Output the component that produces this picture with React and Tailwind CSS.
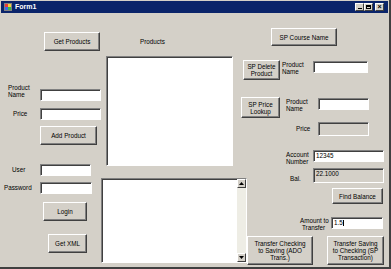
import React from "react";

const font = "font-['Liberation_Sans',Arial,sans-serif]";

// classic raised 3d button
const Btn = ({ className = "", children }) => (
  <div
    className={`flex items-center justify-center text-center leading-[7px] text-[6.3px] text-black bg-[#d4d0c8] border border-t-white border-l-white border-r-[#404040] border-b-[#404040] shadow-[inset_-1px_-1px_0_#808080] ${className}`}
  >
    <div>{children}</div>
  </div>
);

// sunken textbox
const Box = ({ className = "", grey, children }) => (
  <div
    className={`border border-t-[#808080] border-l-[#808080] border-r-white border-b-white shadow-[inset_1px_1px_0_#404040] pl-[2px] pt-[1px] text-[6.3px] leading-[8px] text-black ${grey ? "bg-[#d4d0c8]" : "bg-white"} ${className}`}
  >
    {children}
  </div>
);

const Label = ({ className = "", children }) => (
  <div className={`text-[6.3px] leading-[7px] text-black ${className}`}>{children}</div>
);

const TitleBar = () => (
  <div className="mx-[1px] mt-[1px] h-[12px] bg-[#0a246a] flex items-center pl-[3px] pr-[4px]">
    <svg width="8" height="8" viewBox="0 0 8 8">
      <rect x="0" y="0" width="8" height="8" fill="#808080" />
      <rect x="1" y="1" width="3" height="3" fill="#e83a3a" />
      <rect x="4" y="1" width="3" height="3" fill="#f2d23a" />
      <rect x="1" y="4" width="3" height="3" fill="#3a6ae8" />
      <rect x="4" y="4" width="3" height="3" fill="#3ab84a" />
    </svg>
    <span className="ml-[3px] text-white font-bold text-[7px] leading-[8px]">Form1</span>
    <div className="flex-1" />
    <div className="flex items-center">
      <div className="w-[9px] h-[8px] bg-[#d4d0c8] border border-t-white border-l-white border-r-[#404040] border-b-[#404040] flex items-end justify-center pb-[1px]">
        <div className="w-[4px] h-[1px] bg-black" />
      </div>
      <div className="w-[9px] h-[8px] bg-[#d4d0c8] border border-t-white border-l-white border-r-[#404040] border-b-[#404040] flex items-center justify-center">
        <div className="w-[5px] h-[4px] border border-black border-t-2" />
      </div>
      <div className="ml-[2px] w-[9px] h-[8px] bg-[#d4d0c8] border border-t-white border-l-white border-r-[#404040] border-b-[#404040] flex items-center justify-center text-[7px] leading-[6px] font-bold text-black">
        ×
      </div>
    </div>
  </div>
);

export default function App() {
  return (
    <div className={`${font} w-[391px] h-[269px] bg-[#d4d0c8] border-r-2 border-b-2 border-r-[#404040] border-b-[#404040] flex flex-col overflow-hidden`}>
      <TitleBar />

      <div className="flex flex-1">
        {/* left column */}
        <div className="w-[101px] flex flex-col shrink-0">
          <Btn className="ml-[44px] mt-[19px] w-[56px] h-[19px]">Get Products</Btn>

          <div className="flex mt-[33px]">
            <Label className="ml-[8px] w-[32px]">Product<br />Name</Label>
            <Box className="mt-[5px] w-[61px] h-[12px]" />
          </div>
          <div className="flex mt-[7px]">
            <Label className="ml-[13px] w-[27px] pt-[2px]">Price</Label>
            <Box className="w-[61px] h-[12px]" />
          </div>
          <Btn className="ml-[40px] mt-[6px] w-[57px] h-[19px]">Add Product</Btn>

          <div className="flex mt-[19px]">
            <Label className="ml-[12px] w-[28px] pt-[2px]">User</Label>
            <Box className="w-[51px] h-[12px]" />
          </div>
          <div className="flex mt-[6px]">
            <Label className="ml-[4px] w-[36px] pt-[2px]">Password</Label>
            <Box className="w-[52px] h-[12px]" />
          </div>
          <Btn className="ml-[43px] mt-[8px] w-[44px] h-[19px]">Login</Btn>
          <Btn className="ml-[48px] mt-[13px] w-[39px] h-[19px]">Get XML</Btn>
        </div>

        {/* middle column */}
        <div className="w-[140px] flex flex-col shrink-0">
          <Label className="ml-[39px] mt-[25px]">Products</Label>
          <Box className="ml-[5px] mt-[11px] w-[127px] h-[110px]" />
          <div className="mt-[12px] w-[146px] h-[85px] flex bg-white border border-t-[#808080] border-l-[#808080] border-r-white border-b-white shadow-[inset_1px_1px_0_#404040]">
            <div className="flex-1" />
            <div className="w-[9px] flex flex-col bg-[#eeede5]">
              <div className="h-[9px] bg-[#d4d0c8] border border-t-white border-l-white border-r-[#404040] border-b-[#404040] flex items-center justify-center">
                <svg width="5" height="3" viewBox="0 0 5 3"><path d="M0 3 L2.5 0 L5 3 Z" fill="#000" /></svg>
              </div>
              <div className="flex-1" />
              <div className="h-[9px] bg-[#d4d0c8] border border-t-white border-l-white border-r-[#404040] border-b-[#404040] flex items-center justify-center">
                <svg width="5" height="3" viewBox="0 0 5 3"><path d="M0 0 L2.5 3 L5 0 Z" fill="#000" /></svg>
              </div>
            </div>
          </div>
        </div>

        {/* right column */}
        <div className="flex-1 flex flex-col">
          <Btn className="ml-[30px] mt-[15px] w-[66px] h-[18px]">SP Course Name</Btn>

          <div className="flex mt-[14px]">
            <Btn className="ml-[2px] w-[37px] h-[20px]">SP Delete<br />Product</Btn>
            <Label className="ml-[2px] w-[31px] pt-[1px]">Product<br />Name</Label>
            <Box className="mt-[1px] w-[55px] h-[12px]" />
          </div>

          <div className="flex mt-[17px]">
            <Btn className="w-[39px] h-[21px]">SP Price<br />Lookup</Btn>
            <Label className="ml-[6px] w-[32px] pt-[1px]">Product<br />Name</Label>
            <Box className="mt-[1px] w-[51px] h-[12px]" />
          </div>

          <div className="flex mt-[4px]">
            <Label className="ml-[55px] w-[22px] pt-[3px]">Price</Label>
            <Box grey className="w-[51px] h-[14px]" />
          </div>

          <div className="flex mt-[14px]">
            <Label className="ml-[45px] w-[27px] pt-[1px]">Account<br />Number</Label>
            <Box className="w-[71px] h-[12px]">12345</Box>
          </div>

          <div className="flex mt-[3px]">
            <Label className="ml-[49px] w-[23px] pt-[7px]">Bal.</Label>
            <Box grey className="w-[71px] h-[15px]">22.1000</Box>
          </div>

          <Btn className="ml-[91px] mt-[5px] w-[51px] h-[16px]">Find Balance</Btn>

          <div className="flex mt-[13px]">
            <Label className="ml-[59px] w-[31px]">Amount to<br /><span className="pl-[2px]">Transfer</span></Label>
            <Box className="w-[52px] h-[12px]">
              1.5<span className="inline-block w-[1px] h-[6px] bg-black align-middle" />
            </Box>
          </div>

          <div className="flex mt-[5px]">
            <Btn className="ml-[6px] w-[66px] h-[29px]">Transfer Checking<br />to Saving (ADO<br />Trans.)</Btn>
            <Btn className="ml-[14px] w-[57px] h-[29px]">Transfer Saving<br />to Checking (SP<br />Transaction)</Btn>
          </div>
        </div>
      </div>
    </div>
  );
}
